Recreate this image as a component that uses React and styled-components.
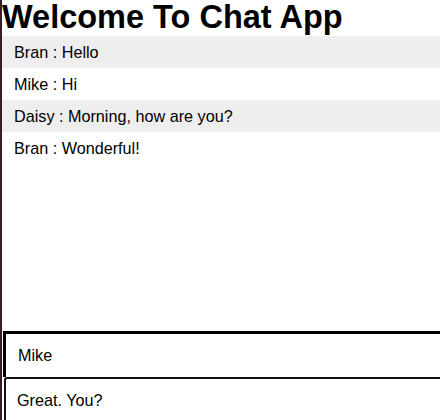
import React from "react";
import styled, { createGlobalStyle } from "styled-components";

const Global = createGlobalStyle`
  html, body {
    margin: 0;
    padding: 0;
    overflow: hidden;
    background: #ffffff;
  }
  body {
    font-family: "Liberation Sans", Arial, sans-serif;
    color: #000;
  }
`;

const Page = styled.div`
  box-sizing: border-box;
  height: 100vh;
  width: 100%;
  border-left: 2px solid #3a1c28;
  display: flex;
  flex-direction: column;
  overflow: hidden;
`;

const Title = styled.h1`
  margin: 0 0 2px 0;
  font-size: 32.5px;
  line-height: 34px;
  font-weight: 700;
  white-space: nowrap;
`;

const MessageList = styled.ul`
  list-style: none;
  margin: 0;
  padding: 0;
  flex: 1;
`;

const Message = styled.li`
  height: 32px;
  box-sizing: border-box;
  padding: 7px 12px 7px 12px;
  font-size: 16.2px;
  line-height: 18px;
  background: ${(p) => (p.$shaded ? "#eeeeee" : "#ffffff")};
  white-space: nowrap;
`;

const Form = styled.form`
  display: flex;
  flex-direction: column;
  margin: 0;
`;

const NameInput = styled.input`
  box-sizing: border-box;
  height: 46px;
  width: calc(100% + 20px);
  margin-left: 1px;
  padding: 0 12px;
  border: 3px solid #000;
  border-right: none;
  border-bottom: none;
  font-family: "Liberation Sans", Arial, sans-serif;
  font-size: 16.2px;
  color: #000;
  outline: none;
  background: #fff;
`;

const TextInput = styled.input`
  box-sizing: border-box;
  height: 46px;
  margin-bottom: -3px;
  width: calc(100% + 20px);
  margin-left: 2px;
  padding: 0 11px;
  border: 2px solid #101010;
  border-radius: 3px;
  font-family: "Liberation Sans", Arial, sans-serif;
  font-size: 16.2px;
  color: #000;
  caret-color: #000;
  outline: none;
  background: #fff;
`;

const messages = [
  { name: "Bran", text: "Hello" },
  { name: "Mike", text: "Hi" },
  { name: "Daisy", text: "Morning, how are you?" },
  { name: "Bran", text: "Wonderful!" },
];

export default function App() {
  return (
    <>
      <Global />
      <Page>
        <Title>Welcome To Chat App</Title>
        <MessageList>
          {messages.map((m, i) => (
            <Message key={i} $shaded={i % 2 === 0}>
              {m.name} : {m.text}
            </Message>
          ))}
        </MessageList>
        <Form onSubmit={(e) => e.preventDefault()}>
          <NameInput defaultValue="Mike" />
          <TextInput defaultValue="Great. You?" />
        </Form>
      </Page>
    </>
  );
}
